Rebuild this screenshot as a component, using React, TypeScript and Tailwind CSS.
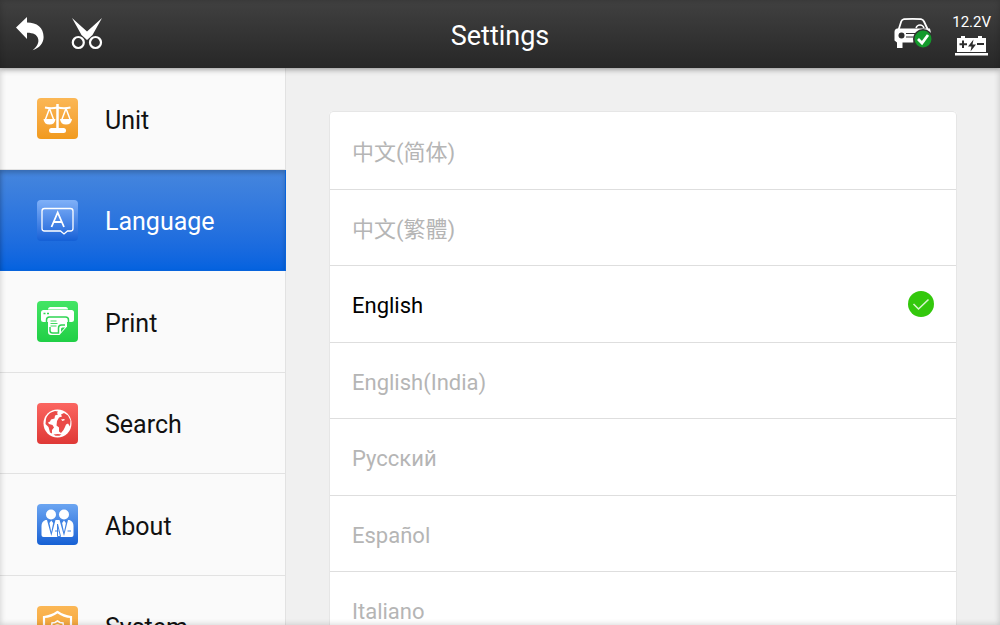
import React, { useState } from "react";

interface Section {
  id: string;
  label: string;
  tile: string;
  icon: React.ReactNode;
}

interface Language {
  code: string;
  name: string;
}

const LANGUAGES: Language[] = [
  { code: "zh-Hans", name: "中文(简体)" },
  { code: "zh-Hant", name: "中文(繁體)" },
  { code: "en", name: "English" },
  { code: "en-IN", name: "English(India)" },
  { code: "ru", name: "Русский" },
  { code: "es", name: "Español" },
  { code: "it", name: "Italiano" },
];

function BackIcon() {
  return (
    <svg width="28" height="34" viewBox="0 0 28 34" fill="white" aria-hidden="true">
      <path d="M0 10.500 11 0v5.500c10 0 16.600 5 16.600 14.500 0 6-4 11-11 13.300 5-4 6.500-8 5.500-11.500-1-4-4.600-6-11.100-6V22z" />
    </svg>
  );
}

function ScissorsIcon() {
  return (
    <svg width="32" height="32" viewBox="0 0 32 32" fill="none" aria-hidden="true">
      <path d="M1 0 16 13.500 31 0 21.500 17 16 22 10.500 17z" fill="white" />
      <circle cx="7.300" cy="24.500" r="5.500" stroke="white" strokeWidth="2.200" />
      <circle cx="24.500" cy="24.500" r="5.500" stroke="white" strokeWidth="2.200" />
    </svg>
  );
}

function CarIcon() {
  return (
    <svg width="38" height="32" viewBox="0 0 38 32" fill="none" aria-hidden="true">
      <path d="M4.500 12 7.200 3.500Q8 1.500 10 1.200q8.500-.5 17 0Q29 1.500 30 3.500L34 12" stroke="white" strokeWidth="1.800" />
      <path d="M3 10.500h33q1 3 1 8H20l-.5 6H8.500V30H3v-5.500L.5 22.500V14q0-3 2.500-3.500z" fill="white" />
      <path d="M22 10q1-3 4-3t4 3" stroke="white" strokeWidth="1.500" />
      <circle cx="7.500" cy="17.500" r="3" fill="#303030" />
      <path d="M12 15.500h10M12 19h8" stroke="#303030" strokeWidth="1" />
      <circle cx="29" cy="21" r="10" fill="#303030" />
      <circle cx="29" cy="21" r="8.500" fill="#149a2c" />
      <path d="m24 21 4 4 6-8" stroke="white" strokeWidth="2.800" />
    </svg>
  );
}

function BatteryIcon() {
  return (
    <svg width="33" height="20" viewBox="0 0 33 20" fill="white" aria-hidden="true">
      <path d="M6 0h4v2h13V0h4v2h4v14H2V2h4zM0 17h33v2.500H0z" />
      <path d="M7 4.500h2v2.800h3v2H9V12H7V9.300H4.500v-2H7zM22 7h7v2h-7z" fill="#2c2c2c" />
      <path d="m18.500 3.500-5.500 7h3.500l-1 5 5.500-7h-3.500z" fill="#2c2c2c" />
    </svg>
  );
}

function ScalesIcon() {
  return (
    <svg width="41" height="41" viewBox="0 0 41 41" fill="none" stroke="white" aria-hidden="true">
      <path d="M20.500 6v25" strokeWidth="2.500" />
      <path d="M8 9.500q6 1.500 12.500 0 6.500 1.500 13 0" strokeWidth="2" />
      <path d="m12.500 10.500-4.500 12m4.500-12 4.500 12m12-12-4.500 12m4.500-12 4.500 12" strokeWidth="1.500" />
      <path d="M6.500 21h12q-.5 5.500-6 5.500T6.500 21zM23 21h12q-.5 5.500-6 5.500T23 21z" fill="white" stroke="none" />
      <rect x="12" y="30" width="17" height="5" rx="2.500" fill="white" stroke="none" />
    </svg>
  );
}

function LanguageIcon() {
  return (
    <svg width="41" height="41" viewBox="0 0 41 41" fill="none" stroke="white" aria-hidden="true">
      <path
        d="M7.500 8.500h26q2.500 0 2.500 2.500v17.500q0 2.500-2.500 2.500h-3L27 34l-3.500-3h-16Q5 31 5 28.500V11q0-2.500 2.500-2.500z"
        strokeWidth="1.300"
      />
      <path d="m14.500 27 6.200-14.500L27 27M17 22h7.500" strokeWidth="1.800" />
    </svg>
  );
}

function PrintIcon() {
  return (
    <svg width="41" height="41" viewBox="0 0 41 41" fill="none" aria-hidden="true">
      <path d="M11 8.500Q11 6 13.500 6h15Q31 6 31 8.500z" fill="white" />
      <rect x="4" y="9" width="33" height="12" rx="2.500" fill="white" />
      <path d="M6.500 12.500h2m1.500 0h2" stroke="#2fd553" strokeWidth="1.600" />
      <path d="M9.500 21.500V19q0-3 3-3h16q3 0 3 3v2.500" stroke="#2fd553" strokeWidth="1.500" />
      <path d="M11 18h19v7.500L22.500 34H14q-3 0-3-3z" fill="white" />
      <path d="M13 26v3.500q0 2.500 2.500 2.500h6v-5q0-3 3-3h3.500" stroke="#2fd553" strokeWidth="1.500" />
      <path d="M24 31v-3q0-1.500 1.500-1.500H28z" fill="#2fd553" />
      <path d="M13.500 20h6m-6 2.500h7m-7 2.500h6" stroke="#42da62" strokeWidth="1.200" />
    </svg>
  );
}

function GlobeIcon() {
  return (
    <svg width="41" height="41" viewBox="0 0 41 41" aria-hidden="true">
      <circle cx="20.500" cy="20.500" r="14" fill="white" />
      <path
        d="M9 16q1-4 5-6.500l4-1.500 3 .5-1 1.500 1 1.500-3 1-.5 3-3.500 1-1 2-2 1 1 1.500 3.500 1 1.500 2.500-2 2.500v3.500l-2-1-1.500-5.500-3-3zM20 18l2-3.500 3-1-1-2 3-1.500 4 2.500 2.500 5-.5 6-2-3-2 1-1 2.500-1.500 3-2.500 3-2-1.500v-4l-2.500-2z"
        fill="#ea4b48"
      />
      <path d="m24 16.500 3-.5 1 1-2.500 1z" fill="white" />
      <path d="M16.500 31.500q4.500-1 8 0l-2 1.200h-4z" fill="#ea4b48" />
    </svg>
  );
}

function PeopleIcon() {
  return (
    <svg width="41" height="41" viewBox="0 0 41 41" fill="white" aria-hidden="true">
      <circle cx="14" cy="10.500" r="5" />
      <circle cx="27" cy="10.500" r="5" />
      <path d="M8.500 16h24q4 1.500 4 6v9q0 2-2 2h-28q-2 0-2-2v-9q0-4.500 4-6z" />
      <path d="m10 16 4.300 16L18.500 16zM22.500 16 27 32l4-16z" fill="#3f82e3" />
      <path d="m14.300 16.500 1.900 2.500-1.900 9-1.900-9zM27 16.500l1.900 2.500-1.900 9-1.900-9z" />
      <path d="m20.500 20 3 12.500h-3zM18 27h3.500m9 0H34" stroke="#3f82e3" strokeWidth="1" />
    </svg>
  );
}

function ShieldIcon() {
  return (
    <svg width="41" height="41" viewBox="0 0 41 41" fill="none" stroke="white" aria-hidden="true">
      <path d="M20.500 6Q27 10.500 34 11v11q0 9-13.500 14Q7 31 7 22V11q7-.5 13.500-5z" strokeWidth="2.200" />
      <path d="m20.500 15 2.500 1.500 3 .5.500 3 1.500 2-1.500 2-.5 3-3 .5-2.500 1.500-2.500-1.500-3-.5-.5-3L13 22l1.500-2 .5-3 3-.5z" strokeWidth="1.600" />
      <circle cx="20.500" cy="22" r="3" strokeWidth="1.500" />
    </svg>
  );
}

const SECTIONS: Section[] = [
  { id: "unit", label: "Unit", tile: "from-[#fbb755] to-[#f19a1c]", icon: <ScalesIcon /> },
  { id: "language", label: "Language", tile: "from-[#7fb0f8] to-[#1460d6]", icon: <LanguageIcon /> },
  { id: "print", label: "Print", tile: "from-[#43e565] to-[#1fcf45]", icon: <PrintIcon /> },
  { id: "search", label: "Search", tile: "from-[#fb6560] to-[#df3836]", icon: <GlobeIcon /> },
  { id: "about", label: "About", tile: "from-[#6ba5f1] to-[#1560d4]", icon: <PeopleIcon /> },
  { id: "system", label: "System", tile: "from-[#fbb755] to-[#f19a1c]", icon: <ShieldIcon /> },
];

function Header() {
  return (
    <header className="z-10 grid h-[68px] shrink-0 grid-cols-[1fr_auto_1fr] items-center bg-linear-to-b from-[#414141] to-[#272727] text-white shadow-[0_1px_6px_rgba(0,0,0,0.45)]">
      <div className="flex items-center gap-[27px] pl-4">
        <button type="button" aria-label="Back">
          <BackIcon />
        </button>
        <button type="button" aria-label="Screenshot">
          <ScissorsIcon />
        </button>
      </div>
      <h1 className="pt-1 text-[27px] leading-8">Settings</h1>
      <div className="flex items-center justify-end gap-5 pr-[9px]">
        <CarIcon />
        <div className="flex flex-col items-center gap-1">
          <span className="text-[15px] leading-5">12.2V</span>
          <BatteryIcon />
        </div>
      </div>
    </header>
  );
}

export default function App() {
  const [section, setSection] = useState("language");
  const [language, setLanguage] = useState("en");

  return (
    <div className="relative flex h-screen flex-col overflow-hidden bg-[#f0f0f0] font-['Roboto','Noto_Sans_CJK_SC',sans-serif]">
      <Header />

      <div className="flex min-h-0 flex-1">
        <nav className="w-[286px] shrink-0 overflow-hidden bg-[#fafafa]">
          {SECTIONS.map((item) => {
            const active = item.id === section;
            return (
              <button
                key={item.id}
                type="button"
                aria-current={active ? "page" : undefined}
                onClick={() => setSection(item.id)}
                className={`flex w-full items-center gap-[27px] border-r border-b pl-[37px] text-left text-[25px] leading-8 odd:h-[102px] even:h-[101px] ${
                  active
                    ? "border-[#0864dc] bg-linear-to-b from-[#4686dd] to-[#0462df] text-white shadow-[inset_0_3px_4px_rgba(0,0,0,0.2)]"
                    : "border-[#e2e2e2] text-[#111111]"
                }`}
              >
                <span className={`size-[41px] shrink-0 overflow-hidden rounded bg-linear-to-b ${item.tile}`}>
                  {item.icon}
                </span>
                <span className="pt-1">{item.label}</span>
              </button>
            );
          })}
        </nav>

        <main className="min-w-0 flex-1 overflow-hidden px-[43px] pt-[43px]">
          <fieldset className="rounded-sm border border-[#e6e6e6] bg-white pt-px">
            <legend className="sr-only">Language</legend>
            {LANGUAGES.map((item) => {
              const checked = item.code === language;
              return (
                <label
                  key={item.code}
                  className={`flex cursor-pointer items-center justify-between border-b border-[#dedede] px-[22px] text-[22px] leading-8 odd:h-[76px] even:h-[77px] ${
                    checked ? "text-black" : "text-[#b5b5b5]"
                  }`}
                >
                  <span className="pt-1">{item.name}</span>
                  <span className="grid size-[26px] place-items-center">
                    <input
                      type="radio"
                      name="language"
                      value={item.code}
                      checked={checked}
                      onChange={() => setLanguage(item.code)}
                      className="size-[26px] appearance-none rounded-full [grid-area:1/1] checked:bg-[#33c80c]"
                    />
                    {checked && (
                      <svg width="26" height="26" viewBox="0 0 26 26" className="pointer-events-none [grid-area:1/1]" aria-hidden="true">
                        <path d="m5.500 13 5 5L20.500 8.500" fill="none" stroke="#d5f6cc" strokeWidth="1.600" />
                      </svg>
                    )}
                  </span>
                </label>
              );
            })}
          </fieldset>
        </main>
      </div>

      {/* soft bezel shading around the screen */}
      <div className="pointer-events-none absolute inset-0 z-20 shadow-[inset_0_0_6px_rgba(0,0,0,0.2)]" />
    </div>
  );
}
